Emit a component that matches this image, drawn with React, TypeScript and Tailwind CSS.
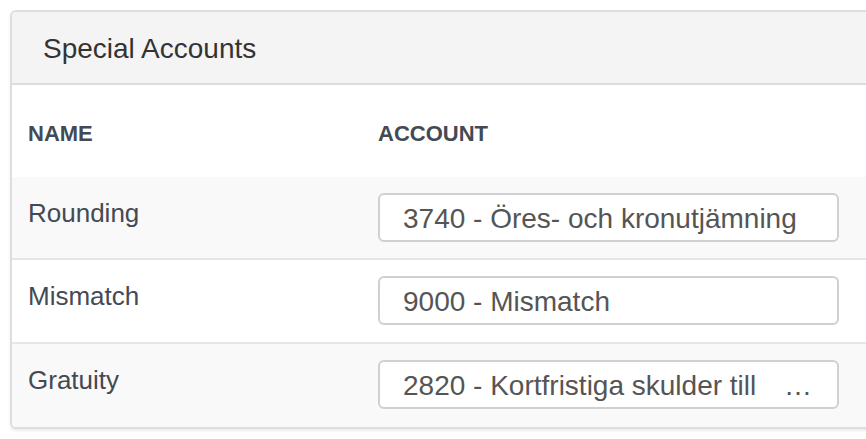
import React from 'react';

type Row = { name: string; account: string; truncated?: boolean };

const ROWS: Row[] = [
  { name: 'Rounding', account: '3740 - Öres- och kronutjämning' },
  { name: 'Mismatch', account: '9000 - Mismatch' },
  { name: 'Gratuity', account: '2820 - Kortfristiga skulder till', truncated: true },
];

const App: React.FC = () => {
  return (
    <div className="w-[866px] h-[439px] overflow-hidden bg-white pt-[10px] pl-[10px] font-['Liberation_Sans',Arial,sans-serif]">
      <div className="w-[900px] rounded-[6px] border-2 border-[#dedede] bg-white shadow-[0_2px_3px_rgba(0,0,0,0.08)] overflow-hidden">
        {/* Panel heading */}
        <div className="h-[73px] bg-[#f4f4f4] border-b-2 border-[#dddddd] flex items-center pl-[31px]">
          <h2 className="text-[28px] text-[#333333] leading-none mt-[2px]">Special Accounts</h2>
        </div>

        {/* Table head */}
        <div className="grid grid-cols-[366px_1fr] h-[92px] items-center text-[22px] font-bold text-[#434a54]">
          <div className="pl-4 pt-[5px]">NAME</div>
          <div className="pt-[5px]">ACCOUNT</div>
        </div>

        {/* Rows */}
        {ROWS.map((row, i) => (
          <div
            key={row.name}
            className={
              'grid grid-cols-[366px_1fr] pt-4 ' +
              (i === 1 ? 'h-[84px] ' : 'h-[83px] ') +
              (i % 2 === 0 ? 'bg-[#f9f9f9] ' : 'bg-white ') +
              (i < ROWS.length - 1 ? 'border-b-2 border-[#e6e6e6]' : '')
            }
          >
            <div className="pl-4 pt-[5px] text-[26px] leading-[30px] text-[#434a54]">{row.name}</div>
            <div className="w-[461px] h-[49px] rounded-[6px] border-2 border-[#d0d0d0] bg-white flex items-center pl-[23px] pr-[25px] text-[28px] text-[#555555]">
              <span className="whitespace-nowrap mt-[2px]">{row.account}</span>
              {row.truncated && <span className="ml-auto mt-[2px]">…</span>}
            </div>
          </div>
        ))}
      </div>
    </div>
  );
};

export default App;
